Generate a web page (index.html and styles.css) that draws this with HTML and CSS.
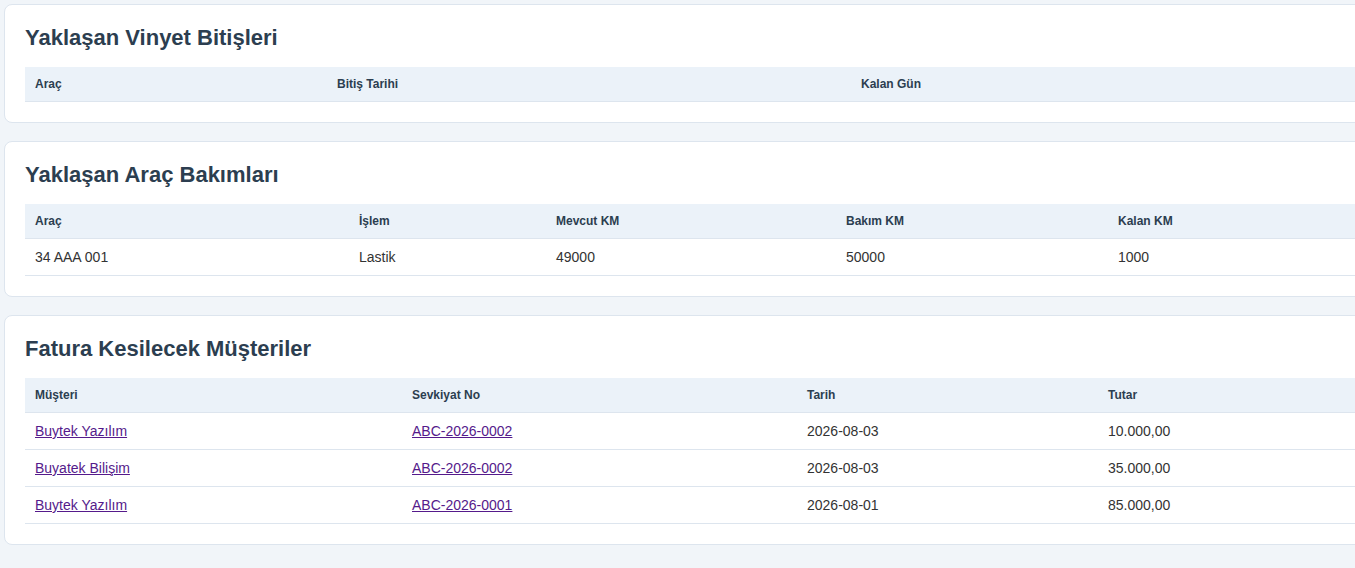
FILE: index.html
```html
<!DOCTYPE html>
<html lang="tr">
<head>
<meta charset="utf-8">
<title>Panel</title>
<link rel="stylesheet" href="styles.css">
</head>
<body>
<main class="page">
  <section class="card">
    <h2 class="card-title">Yaklaşan Vinyet Bitişleri</h2>
    <table class="data">
      <colgroup><col class="c1-1"><col class="c1-2"><col class="c1-3"></colgroup>
      <thead><tr><th>Araç</th><th>Bitiş Tarihi</th><th>Kalan Gün</th></tr></thead>
      <tbody></tbody>
    </table>
  </section>

  <section class="card">
    <h2 class="card-title">Yaklaşan Araç Bakımları</h2>
    <table class="data">
      <colgroup><col class="c2-1"><col class="c2-2"><col class="c2-3"><col class="c2-4"><col class="c2-5"></colgroup>
      <thead><tr><th>Araç</th><th>İşlem</th><th>Mevcut KM</th><th>Bakım KM</th><th>Kalan KM</th></tr></thead>
      <tbody>
        <tr><td>34 AAA 001</td><td>Lastik</td><td>49000</td><td>50000</td><td>1000</td></tr>
      </tbody>
    </table>
  </section>

  <section class="card">
    <h2 class="card-title">Fatura Kesilecek Müşteriler</h2>
    <table class="data">
      <colgroup><col class="c3-1"><col class="c3-2"><col class="c3-3"><col class="c3-4"></colgroup>
      <thead><tr><th>Müşteri</th><th>Sevkiyat No</th><th>Tarih</th><th>Tutar</th></tr></thead>
      <tbody>
        <tr><td><a href="#">Buytek Yazılım</a></td><td><a href="#">ABC-2026-0002</a></td><td>2026-08-03</td><td>10.000,00</td></tr>
        <tr><td><a href="#">Buyatek Bilişim</a></td><td><a href="#">ABC-2026-0002</a></td><td>2026-08-03</td><td>35.000,00</td></tr>
        <tr><td><a href="#">Buytek Yazılım</a></td><td><a href="#">ABC-2026-0001</a></td><td>2026-08-01</td><td>85.000,00</td></tr>
      </tbody>
    </table>
  </section>
</main>
</body>
</html>
```

FILE: styles.css
```css
html, body {
  margin: 0;
  padding: 0;
  overflow: hidden;
  background: #f1f5f9;
}
body {
  font-family: "Liberation Sans", Arial, sans-serif;
  color: #333;
}
.page {
  width: 1520px;
  padding: 4px;
  display: flex;
  flex-direction: column;
  gap: 18px;
}
.card {
  background: #fff;
  border: 1px solid #dde5ee;
  border-radius: 8px;
  padding: 20px;
}
.card-title {
  margin: 0 0 16px;
  font-size: 22px;
  line-height: 26px;
  font-weight: 700;
  color: #2c3e50;
}
.data {
  width: 100%;
  border-collapse: collapse;
  table-layout: fixed;
}
.data th {
  background: #ebf2f9;
  color: #2c3e50;
  font-size: 12px;
  line-height: 14px;
  font-weight: 700;
  text-align: left;
  padding: 10px;
  border-bottom: 1px solid #dde5ee;
}
.data td {
  font-size: 14px;
  line-height: 16px;
  padding: 10px;
  border-bottom: 1px solid #dde5ee;
  color: #333;
}
.data a {
  color: #551a8b;
  text-decoration: underline;
}
.c1-1 { width: 302px; }
.c1-2 { width: 524px; }
.c2-1 { width: 324px; }
.c2-2 { width: 197px; }
.c2-3 { width: 290px; }
.c2-4 { width: 272px; }
.c3-1 { width: 377px; }
.c3-2 { width: 395px; }
.c3-3 { width: 301px; }
```
